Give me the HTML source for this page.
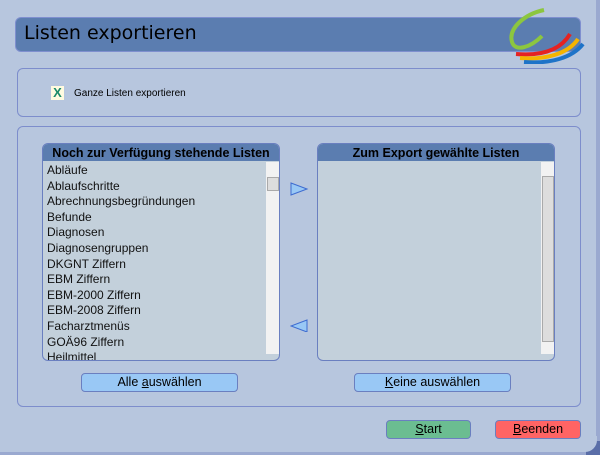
<!DOCTYPE html>
<html><head><meta charset="utf-8"><style>
body{margin:0;width:600px;height:455px;background:#b7c6de;font-family:"Liberation Sans",Arial,sans-serif;overflow:hidden}
.win{position:absolute;left:0;top:0;width:600px;height:455px;background:#b7c6de;}
.title{position:absolute;left:15px;top:17px;width:564px;height:33px;background:#5b7db0;border:1px solid #7f8fcf;border-radius:6px;}
.title span{position:absolute;left:8px;top:4px;font-family:"Comic Sans MS","DejaVu Sans",cursive;font-size:19px;color:#000}
.grp{position:absolute;border:1px solid #7d8dcc;border-radius:6px}
.list{position:absolute;border:1px solid #6a7fc0;border-radius:6px;background:#c3d0db;overflow:hidden}
.hd{height:17px;background:#5b7db0;text-align:center;font-weight:bold;font-size:12.5px;line-height:18px;color:#000}
.items{position:absolute;left:4px;top:19px;font-size:12px;line-height:15.6px;color:#111}
.sb{position:absolute;right:0;top:18px;width:13px;bottom:6px;background:#f2f2f2}
.btn{position:absolute;height:17px;border:1px solid #6a7fc0;border-radius:4px;font-size:12.5px;text-align:center;line-height:17px}
</style></head><body><div class="win">
<div style="position:absolute;right:0;top:0;width:4px;height:455px;background:#9aa9d0"></div>
<div style="position:absolute;left:0;bottom:0;width:600px;height:3px;background:#9aa9d0"></div>
<div style="position:absolute;right:0;bottom:0;width:14px;height:14px;background:#5a6ea8;border-radius:0"></div>
<div style="position:absolute;right:3px;bottom:3px;width:16px;height:16px;background:#b7c6de;border-radius:0 0 12px 0"></div>
<div class="title"><span>Listen exportieren</span></div>
<svg style="position:absolute;left:500px;top:6px" width="85" height="58" viewBox="0 0 85 58">
<path d="M44 4 C25 8 8 22 12 36 C15 46 30 42 42 30" fill="none" stroke="#8cc63f" stroke-width="4"/>
<path d="M16 48 C40 50 60 45 70 28" fill="none" stroke="#e52222" stroke-width="4"/>
<path d="M20 52 C45 54 68 48 78 33" fill="none" stroke="#f5b400" stroke-width="4"/>
<path d="M24 56 C50 58 72 52 83 38" fill="none" stroke="#1e73c8" stroke-width="4"/>
</svg>
<div class="grp" style="left:17px;top:68px;width:562px;height:47px"></div>
<div style="position:absolute;left:51px;top:86px;width:13px;height:14px;background:#fffbe0;color:#1a8a6a;font-weight:bold;font-size:13px;line-height:14px;text-align:center">X</div>
<div style="position:absolute;left:74px;top:88px;font-size:10px">Ganze Listen exportieren</div>
<div class="grp" style="left:17px;top:126px;width:562px;height:279px"></div>
<div class="list" style="left:42px;top:143px;width:236px;height:216px"><div class="hd">Noch zur Verfügung stehende Listen</div>
<div class="items">Abläufe<br>Ablaufschritte<br>Abrechnungsbegründungen<br>Befunde<br>Diagnosen<br>Diagnosengruppen<br>DKGNT Ziffern<br>EBM Ziffern<br>EBM-2000 Ziffern<br>EBM-2008 Ziffern<br>Facharztmenüs<br>GOÄ96 Ziffern<br>Heilmittel</div>
<div class="sb"><div style="position:absolute;left:1px;top:15px;width:10px;height:12px;background:#ddd;border:1px solid #aaa"></div></div></div>
<div class="list" style="left:317px;top:143px;width:236px;height:216px"><div class="hd">Zum Export gewählte Listen</div>
<div class="sb"><div style="position:absolute;left:1px;top:14px;width:10px;height:164px;background:#ddd;border:1px solid #aaa"></div></div></div>
<svg style="position:absolute;left:290px;top:182px" width="20" height="150"><path d="M1 1 L17 7 L1 13Z" fill="#99c8f5" stroke="#3d6bd0"/><path d="M17 138 L1 144 L17 150Z" fill="#99c8f5" stroke="#3d6bd0"/></svg>
<div class="btn" style="left:81px;top:373px;width:155px;background:#99c8f5">Alle <u>a</u>uswählen</div>
<div class="btn" style="left:354px;top:373px;width:155px;background:#99c8f5"><u>K</u>eine auswählen</div>
<div class="btn" style="left:386px;top:420px;width:83px;background:#6bbd91"><u>S</u>tart</div>
<div class="btn" style="left:495px;top:420px;width:84px;background:#ff6464"><u>B</u>eenden</div>
</div></body></html>
